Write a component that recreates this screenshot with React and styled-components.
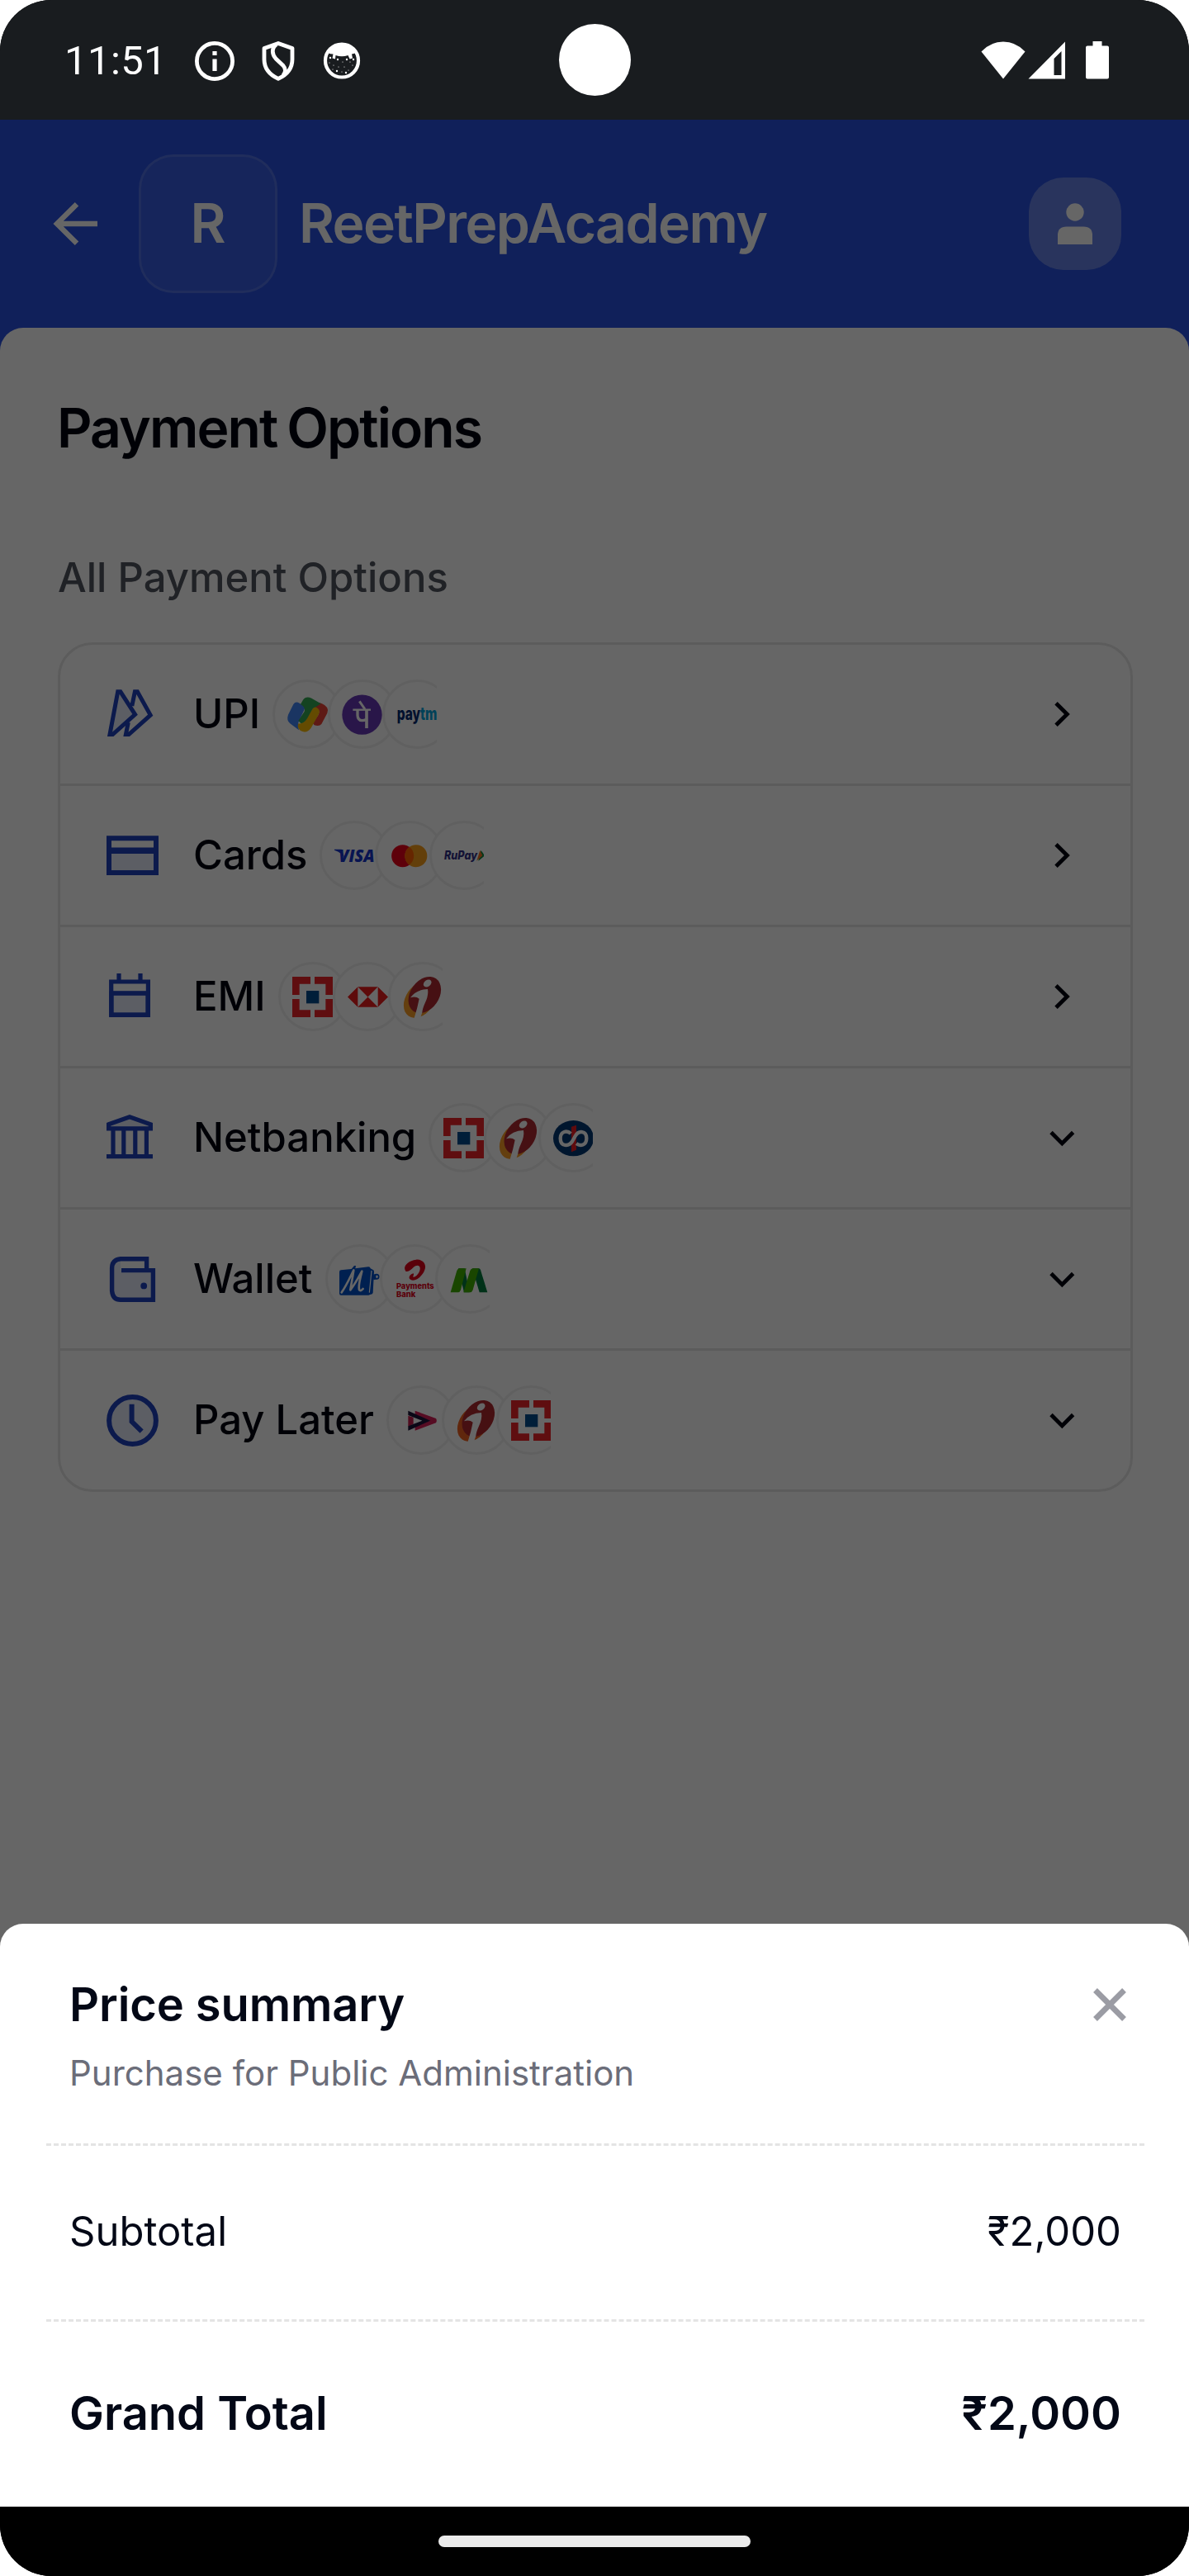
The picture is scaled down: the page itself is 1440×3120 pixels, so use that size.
import React from "react";
import styled, { createGlobalStyle } from "styled-components";

const GlobalStyle = createGlobalStyle`
  body {
    margin: 0;
    background: #ffffff;
    font-family: Inter, Roboto, "Noto Sans", sans-serif;
    -webkit-font-smoothing: antialiased;
  }
  h1, h2, p { margin: 0; }
  button { border: 0; background: none; padding: 0; }
`;

const BLUE = "#1e41be";

const Phone = styled.div`
  width: 1440px;
  height: 3120px;
  display: flex;
  flex-direction: column;
  border-radius: 62px;
  overflow: hidden;
  background: #000000;
`;

/* ---------- status bar ---------- */

const StatusBar = styled.div`
  position: relative;
  height: 145px;
  flex: none;
  box-sizing: border-box;
  padding: 3px 97px 0 78px;
  display: flex;
  align-items: center;
  justify-content: space-between;
  background: #191c1f;
  color: #ffffff;
`;

const StatusGroup = styled.div`
  display: flex;
  align-items: center;
`;

const Clock = styled.span`
  width: 158px;
  font-family: Roboto, sans-serif;
  font-size: 49px;
  line-height: 58px;
  letter-spacing: 0.4px;
`;

const StatusIcon = styled.svg`
  display: block;
  flex: none;
  width: ${(p) => p.$w}px;
  height: 48px;
  margin-left: ${(p) => p.$gap || 0}px;
`;

const Camera = styled.div`
  position: absolute;
  left: 677px;
  top: 29px;
  width: 87px;
  height: 87px;
  border-radius: 50%;
  background: #ffffff;
`;

/* ---------- page ---------- */

const Body = styled.div`
  position: relative;
  height: 2891px;
  flex: none;
  display: flex;
  flex-direction: column;
  background: #2850e1;
`;

const Header = styled.header`
  height: 252px;
  flex: none;
  box-sizing: border-box;
  padding: 0 82px 0 64px;
  display: flex;
  align-items: center;
`;

const BackButton = styled.button`
  width: 56px;
  height: 56px;
`;

const LogoBox = styled.div`
  box-sizing: border-box;
  width: 168px;
  height: 168px;
  margin: 0 26px 0 48px;
  padding-bottom: 2px;
  display: flex;
  align-items: center;
  justify-content: center;
  border: 3px solid rgba(255, 255, 255, 0.19);
  border-radius: 42px;
  background: rgba(255, 255, 255, 0.07);
  background-clip: padding-box;
  color: #ffffff;
  font-size: 66px;
  font-weight: 600;
  line-height: 80px;
`;

const Title = styled.h1`
  flex: 1;
  padding-bottom: 2px;
  color: #ffffff;
  font-size: 66px;
  font-weight: 600;
  line-height: 80px;
  letter-spacing: -1.6px;
`;

const Avatar = styled.div`
  width: 112px;
  height: 112px;
  border-radius: 42px;
  background: rgba(255, 255, 255, 0.29);
`;

const Panel = styled.main`
  flex: 1;
  padding: 81px 68px 0 70px;
  border-radius: 28px 28px 0 0;
  background: #ffffff;
`;

const PanelTitle = styled.h2`
  margin-left: -1px;
  color: #02040f;
  font-size: 66px;
  font-weight: 600;
  line-height: 80px;
  letter-spacing: -1.9px;
  word-spacing: -3px;
`;

const SectionLabel = styled.p`
  margin: 112px 0 48px;
  color: #525560;
  font-size: 49px;
  font-weight: 500;
  line-height: 60px;
`;

const OptionList = styled.div`
  border: 3px solid #e6e6e6;
  border-radius: 42px;
`;

const OptionRow = styled.div`
  height: 168px;
  padding: 0 55px 0 56px;
  display: flex;
  align-items: center;
  & + & {
    border-top: 3px solid #e6e6e6;
  }
`;

const OptionIcon = styled.svg`
  display: block;
  flex: none;
  width: 64px;
  height: 64px;
`;

const OptionName = styled.span`
  margin: 0 15px 0 41px;
  color: #02040f;
  font-size: 49px;
  font-weight: 500;
  line-height: 60px;
`;

const Chips = styled.div`
  width: 199px;
  display: flex;
  overflow: hidden;
`;

const Chip = styled.div`
  box-sizing: border-box;
  flex: none;
  width: 84px;
  height: 84px;
  display: flex;
  align-items: center;
  justify-content: center;
  border: 3px solid #f1f1f1;
  border-radius: 50%;
  background: #ffffff;
  & + & {
    margin-left: -17.5px;
  }
`;

const ChipLogo = styled.svg`
  display: block;
  width: 49px;
  height: 49px;
  overflow: visible;
`;

const Chevron = styled.svg`
  display: block;
  width: 56px;
  height: 56px;
  margin-left: auto;
`;

/* ---------- price sheet ---------- */

const Backdrop = styled.div`
  position: absolute;
  inset: 0;
  display: flex;
  flex-direction: column;
  justify-content: flex-end;
  background: rgba(0, 0, 0, 0.6);
`;

const Sheet = styled.section`
  height: 706px;
  box-sizing: border-box;
  padding: 0 54px 0 56px;
  border-radius: 28px 28px 0 0;
  background: #ffffff;
  color: #030816;
`;

const SheetHeader = styled.div`
  height: 266px;
  box-sizing: border-box;
  padding: 63px 14px 0 28px;
  display: flex;
  justify-content: space-between;
  align-items: flex-start;
`;

const SheetTitle = styled.h2`
  font-size: 56px;
  font-weight: 600;
  line-height: 70px;
  letter-spacing: -0.1px;
`;

const SheetNote = styled.p`
  margin-top: 22px;
  color: #6b6d79;
  font-size: 42px;
  font-weight: 400;
  line-height: 52px;
`;

const CloseButton = styled.button`
  width: 56px;
  height: 56px;
  margin-top: 7px;
`;

const AmountRow = styled.div`
  box-sizing: border-box;
  height: ${(p) => (p.$total ? 227 : 213)}px;
  padding: 0 28px 2px;
  display: flex;
  align-items: center;
  justify-content: space-between;
  border-top: 3px dashed #e4e4e4;
  font-size: ${(p) => (p.$total ? 56 : 49)}px;
  font-weight: ${(p) => (p.$total ? 600 : 400)};
  line-height: 70px;
`;

const NavBar = styled.div`
  flex: 1;
  display: flex;
  align-items: center;
  justify-content: center;
  background: #000000;
`;

const NavHandle = styled.div`
  width: 378px;
  height: 14px;
  border-radius: 7px;
  background: #ebebeb;
`;

/* ---------- option icons ---------- */

const iconProps = { fill: "none", stroke: BLUE, strokeWidth: 5.4 };

const icons = {
  upi: (
    <g {...iconProps} strokeWidth="5">
      <path d="M13.7 4.8H16.9L34.6 32.3L7.5 56.5H4Z" fill="#e6ecfb" />
      <path d="M30.8 22L34.4 4.8H37.4L53.2 33.1L27 56.5H23.4L26.3 42" />
    </g>
  ),
  card: (
    <g {...iconProps} strokeWidth="6">
      <rect x="3" y="27" width="57" height="26" fill="#e6ecfb" />
      <path d="M3 11.3H60V53H3ZM3 25.5H60" />
    </g>
  ),
  calendar: (
    <g {...iconProps} strokeWidth="5.2">
      <rect x="6" y="28" width="44" height="26" fill="#e6ecfb" />
      <path d="M5.7 14H50.4V54.4H5.7ZM5.7 28H50.4M15 4V14M41 4V14" />
    </g>
  ),
  bank: (
    <g {...iconProps} strokeWidth="5.2">
      <path d="M2.6 15.8L28 6.8L53.4 15.8V20.8H2.6Z" fill="#e6ecfb" />
      <path d="M8 21V53M20.8 21V53M34.8 21V53M48.4 21V53M0 54.6H56" />
    </g>
  ),
  wallet: (
    <g {...iconProps}>
      <path d="M17 21.600V7.800L10.800 10.500Q6.600 13.800 6.600 19V46.500Q6.600 51.500 10.800 54.600L17 57.300H56.400V21.600Z" fill="#e6ecfb" stroke="none" />
      <path d="M48.600 21.500V7.800H17Q6.600 8.800 6.600 19V46.500Q7.600 57.300 17 57.300H56.400V21.600H18" />
      <circle cx="45.2" cy="40.4" r="3.9" fill={BLUE} stroke="none" />
    </g>
  ),
  clock: (
    <g {...iconProps} strokeWidth="6">
      <circle cx="31.5" cy="32.5" r="28.4" fill="#e6ecfb" />
      <path d="M30.6 12.7V33.8L42.6 45.6" />
    </g>
  ),
};

/* ---------- brand marks ---------- */

const Hdfc = (
  <g>
    <path d="M0 0H66V26H26V66H0ZM81 0H147V66H121V26H81ZM0 81H26V121H66V147H0ZM121 81H147V147H81V121H121Z" fill="#ed232a" />
    <rect x="51" y="51" width="46" height="46" fill="#004c8f" />
  </g>
);

const IciciMark = ({ back, front }) => (
  <g>
    <ellipse cx="64" cy="84" rx="51" ry="71" transform="rotate(35 64 84)" fill={back} />
    <ellipse cx="82" cy="66" rx="52" ry="72" transform="rotate(35 82 66)" fill={front} />
    <ellipse cx="92" cy="24" rx="16" ry="11.5" transform="rotate(-35 92 24)" fill="#fff" />
    <path d="M30 76Q52 46 93 45Q97 66 84 94Q74 116 73 130L66 150H44Q56 112 62 80Q50 70 30 76Z" fill="#fff" />
  </g>
);

const LogoText = styled.text`
  font-family: ${(p) => p.$family || "Inter"}, sans-serif;
  font-weight: 800;
  font-style: ${(p) => (p.$italic ? "italic" : "normal")};
`;

const logos = {
  gpay: (
    <g>
      <path d="M94 46Q108 24 126 34Q154 46 145 68L124 108Q116 118 98 112L92 104L112 76Q120 60 108 50Z" fill="#ea4335" />
      <path d="M22 36Q30 24 44 32L66 46L44 94Q36 106 42 130L10 106Q-4 94 3 74Z" fill="#4285f4" />
      <path d="M48 36L57 20Q68 4 88 14L122 34L96 50L72 94Q62 108 48 104L40 96L62 62Q68 48 48 36Z" fill="#34a853" />
      <path d="M40 106Q60 108 72 88L92 52Q102 40 114 54Q120 62 112 76L86 122Q70 144 48 132Q34 122 40 106Z" fill="#fbbc04" />
    </g>
  ),
  phonepe: (
    <g>
      <circle cx="73.5" cy="74" r="72.5" fill="#6739b7" />
      <g fill="none" stroke="#fff" strokeWidth="9">
        <path d="M40 56H105" strokeWidth="7" />
        <path d="M64 25L84 54" />
        <path d="M90 56V123" strokeWidth="11" />
        <path d="M57 57V76Q58 95 74 95Q82 95 88 91" strokeWidth="10" />
      </g>
    </g>
  ),
  paytm: (
    <LogoText x="-1" y="93" fontSize="64" fill="#002970" textLength="146" lengthAdjust="spacingAndGlyphs">
      pay<tspan fill="#00a3dc">tm</tspan>
    </LogoText>
  ),
  visa: (
    <g fill="#1434cb">
      <LogoText x="16" y="97" fontSize="65" $family="Open Sans" $italic textLength="130" lengthAdjust="spacingAndGlyphs">VISA</LogoText>
      <path d="M0 50H26L38 84Q28 62 0 53Z" />
    </g>
  ),
  mastercard: (
    <g>
      <circle cx="50" cy="74" r="40.5" fill="#eb001b" />
      <circle cx="98.5" cy="74" r="40.5" fill="#f79e1b" />
      <path d="M74.3 41.5A40.5 40.5 0 0 1 74.3 106.5A40.5 40.5 0 0 1 74.3 41.5Z" fill="#ff5f00" />
    </g>
  ),
  rupay: (
    <g>
      <LogoText x="0" y="88" fontSize="44" $italic fill="#302f84" textLength="120" lengthAdjust="spacingAndGlyphs">RuPay</LogoText>
      <path d="M134 54L147 73L124 92Z" fill="#088b40" />
      <path d="M130 54L139 73L118 92Z" fill="#f37021" />
    </g>
  ),
  hdfc: Hdfc,
  hsbc: (
    <g>
      <path d="M0 73.5L37 37V110ZM147 73.5L110 37V110ZM37 37H110L73.5 73.5ZM37 110H110L73.5 73.5Z" fill="#ea1c1c" />
    </g>
  ),
  icici: <IciciMark back="#f99d27" front="#b02a30" />,
  iciciLater: <IciciMark back="#f06321" front="#ae282e" />,
  kotak: (
    <g>
      <ellipse cx="73.5" cy="74" rx="73.5" ry="65" fill="#003874" />
      <path d="M66 32L84 26V116L66 124Z" fill="#ed1c24" />
      <path d="M64 57C50 44 26 48 26 74C26 104 56 106 70 84L80 66C92 44 121 46 121 74C121 100 98 104 84 93" fill="none" stroke="#fff" strokeWidth="13" />
    </g>
  ),
  mobikwik: (
    <g>
      <path d="M0 47Q0 40 6 40L44 36L54 24H60L58 34L106 28Q112 28 113 34L121 38Q126 39 126 46L122 122Q121 128 114 128L106 131H6Q0 131 0 125Z" fill="#0050c8" />
      <path d="M117 42L109 122" stroke="#fff" strokeWidth="3.5" />
      <path d="M8 121C24 100 40 64 52 40C48 70 42 96 40 112C56 92 70 66 82 44C76 72 68 92 72 112Q78 118 86 108" fill="none" stroke="#fff" strokeWidth="8" strokeLinecap="round" strokeLinejoin="round" />
      <circle cx="135" cy="64" r="8" fill="none" stroke="#0050c8" strokeWidth="5" />
      <path d="M122 56L134 54V73L124 76Z" fill="#0050c8" />
      <circle cx="135" cy="64" r="2.5" fill="#fff" />
    </g>
  ),
  airtel: (
    <g fill="#e2001a">
      <path d="M40 44C28 28 46 6 78 2C104 0 118 20 108 42C100 62 76 82 60 76C46 70 54 56 68 52C72 58 64 62 68 65C78 66 94 46 92 32C90 20 78 22 68 30C60 38 50 48 40 44Z" />
      <LogoText x="6" y="108" fontSize="28" textLength="137" lengthAdjust="spacingAndGlyphs">Payments</LogoText>
      <LogoText x="6" y="139" fontSize="28" textLength="70" lengthAdjust="spacingAndGlyphs">Bank</LogoText>
    </g>
  ),
  greenM: (
    <g>
      <path d="M33 34H56L74 121H54Z" fill="#007a3d" />
      <path d="M84 34H108Q112 34 114 40L139 121H110Z" fill="#007a3d" />
      <path d="M5 121L28 42Q31 34 38 34H62L42 112Q39 121 32 121Z" fill="#40b000" />
      <path d="M52 121L76 42Q79 34 86 34H108L86 112Q83 121 76 121Z" fill="#40b000" />
    </g>
  ),
  lazypay: (
    <g>
      <path d="M25 56L44 62V86L25 95Z" fill="#c81e4e" />
      <path d="M50 38L126 66Q131 74 126 82L50 110V96L104 74L50 52Z" fill="#d81f58" />
      <path d="M25 38L106 74L25 110V94L76 74L25 54Z" fill="#1a1238" />
    </g>
  ),
};

const options = [
  { icon: "upi", name: "UPI", brands: ["gpay", "phonepe", "paytm"] },
  { icon: "card", name: "Cards", brands: ["visa", "mastercard", "rupay"] },
  { icon: "calendar", name: "EMI", brands: ["hdfc", "hsbc", "icici"] },
  { icon: "bank", name: "Netbanking", brands: ["hdfc", "icici", "kotak"], expands: true },
  { icon: "wallet", name: "Wallet", brands: ["mobikwik", "airtel", "greenM"], expands: true },
  { icon: "clock", name: "Pay Later", brands: ["lazypay", "iciciLater", "hdfc"], expands: true },
];

function Option({ icon, name, brands, expands }) {
  return (
    <OptionRow>
      <OptionIcon viewBox="0 0 64 64">{icons[icon]}</OptionIcon>
      <OptionName>{name}</OptionName>
      <Chips>
        {brands.map((b) => (
          <Chip key={b}>
            <ChipLogo viewBox="0 0 147 147">{logos[b]}</ChipLogo>
          </Chip>
        ))}
      </Chips>
      <Chevron viewBox="0 0 56 56" fill="none" stroke="#02040f" strokeWidth="4.8">
        <path d={expands ? "M15 21.500L28.300 34.900L41.600 21.500" : "M21 14.700L34.400 28L21 41.300"} />
      </Chevron>
    </OptionRow>
  );
}

const whiskers = [
  [9, 20], [8, 26], [13, 29], [18, 22], [19, 31], [24, 25], [29, 22], [26, 31],
  [33, 25], [37, 22], [36, 29], [12, 34], [17, 36], [23, 37], [31, 35], [28, 38],
];

function Status() {
  return (
    <StatusBar>
      <StatusGroup>
        <Clock>11:51</Clock>
        <StatusIcon $w={48} viewBox="0 0 48 48">
          <circle cx="24" cy="24" r="21.6" fill="none" stroke="#fff" strokeWidth="4.8" />
          <path d="M21.4 12H26.6V17H21.4ZM21.4 21.5H26.6V36H21.4Z" fill="#fff" />
        </StatusIcon>
        <StatusIcon $w={40} $gap={33} viewBox="0 0 40 48" fill="none" stroke="#fff" strokeWidth="4.8">
          <path d="M20 2.4L37 8.6V22C37 32.5 30.5 40.5 20 45.4C9.5 40.5 3 32.5 3 22V8.6Z" strokeLinejoin="round" />
          <path d="M17.5 4C11.5 8.5 12.5 16 17 21L26 29.5C30 34 28.5 37.500 26 41" />
        </StatusIcon>
        <StatusIcon $w={46} $gap={34} viewBox="0 0 46 48">
          <circle cx="23" cy="23.5" r="20" fill="#191c1f" stroke="#fff" strokeWidth="4.2" />
          <path d="M6 14C10 6 16 2 23 2S36 6 40 14Q37 15 35 15.6L36 20.500L32.600 21.500L30.500 17Q23 19.500 15.500 17L15 21.500L11.500 20.500L12.500 15.6Q9 15.5 6 14Z" fill="#fff" />
          <g fill="#fff">
            {whiskers.map(([x, y], i) => (
              <circle key={i} cx={x} cy={y} r={i % 3 ? 0.6 : 1.2} />
            ))}
          </g>
        </StatusIcon>
      </StatusGroup>
      <Camera />
      <StatusGroup>
        <StatusIcon $w={54} viewBox="0 0 54 48">
          <path d="M0.5 12.4Q12 0.6 27 0.6T53.5 12.4L27 45.5Z" fill="#fff" />
        </StatusIcon>
        <StatusIcon $w={46} $gap={3} viewBox="0 0 46 48">
          <path d="M45 0.6V45.5H0.5ZM40.5 12L31.5 21V41H40.5Z" fill="#fff" fillRule="evenodd" />
        </StatusIcon>
        <StatusIcon $w={28} $gap={24} viewBox="0 0 28 48">
          <path d="M8.5 0H19.5V5.5H26Q28 5.5 28 7.5V43.5Q28 45.5 26 45.5H2Q0 45.5 0 43.5V7.5Q0 5.5 2 5.5H8.5Z" fill="#fff" />
        </StatusIcon>
      </StatusGroup>
    </StatusBar>
  );
}

export default function App() {
  return (
    <>
      <GlobalStyle />
      <Phone>
        <Status />
        <Body>
          <Header>
            <BackButton aria-label="Back">
              <svg width="56" height="56" viewBox="0 0 56 56" fill="none" stroke="#fff" strokeWidth="6.4">
                <path d="M5 28H54M29 4.3L5 28L29 51.7" />
              </svg>
            </BackButton>
            <LogoBox>R</LogoBox>
            <Title>ReetPrepAcademy</Title>
            <Avatar>
              <svg width="112" height="112" viewBox="0 0 112 112" fill="#fff">
                <circle cx="56" cy="42" r="10.7" />
                <path d="M35 81V70Q35 59.5 45.5 59.5H66.5Q77 59.5 77 70V81Z" />
              </svg>
            </Avatar>
          </Header>
          <Panel>
            <PanelTitle>Payment Options</PanelTitle>
            <SectionLabel>All Payment Options</SectionLabel>
            <OptionList>
              {options.map((o) => (
                <Option key={o.name} {...o} />
              ))}
            </OptionList>
          </Panel>
          <Backdrop>
            <Sheet>
              <SheetHeader>
                <div>
                  <SheetTitle>Price summary</SheetTitle>
                  <SheetNote>Purchase for Public Administration</SheetNote>
                </div>
                <CloseButton aria-label="Close">
                  <svg width="56" height="56" viewBox="0 0 56 56" fill="none" stroke="#9b9ca4" strokeWidth="6.8">
                    <path d="M10.5 10.5L45.5 45.5M45.5 10.5L10.5 45.5" />
                  </svg>
                </CloseButton>
              </SheetHeader>
              <AmountRow>
                <span>Subtotal</span>
                <span>₹2,000</span>
              </AmountRow>
              <AmountRow $total>
                <span>Grand Total</span>
                <span>₹2,000</span>
              </AmountRow>
            </Sheet>
          </Backdrop>
        </Body>
        <NavBar>
          <NavHandle />
        </NavBar>
      </Phone>
    </>
  );
}
